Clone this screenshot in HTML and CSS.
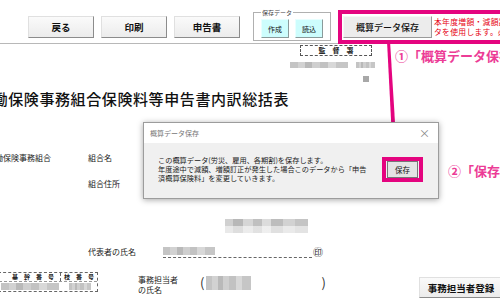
FILE: index.html
```html
<!DOCTYPE html>
<html>
<head>
<meta charset="utf-8">
<title>概算データ保存</title>
<link rel="stylesheet" href="styles.css">
</head>
<body>
<div class="page">
	<div class="toolbar">
		<button class="btn">戻る</button>
		<button class="btn">印刷</button>
		<button class="btn">申告書</button>
		<fieldset class="saved">
			<legend>保存データ</legend>
			<button class="btn-cyan">作成</button>
			<button class="btn-cyan">読込</button>
		</fieldset>
		<div class="highlight">
			<button class="btn-estimate">概算データ保存</button>
			<p class="notice">本年度増額・減額訂正<br>タを使用します。必ず</p>
		</div>
	</div>

	<div class="sheet">
		<div class="office">
			<div class="stamp">監　督　署</div>
			<div class="office-code"><span class="mosaic m1"></span><span class="mosaic m2"></span></div>
			<span class="mosaic m3"></span>
		</div>
		<h1 class="title">労働保険事務組合保険料等申告書内訳総括表</h1>
		<div class="row row-union">
			<span class="org">労働保険事務組合</span>
			<span class="label">組合名</span>
		</div>
		<div class="row row-address">
			<span class="label">組合住所</span>
		</div>
		<span class="mosaic m4"></span>
		<div class="row row-rep">
			<span class="label">代表者の氏名</span>
			<span class="sign"><span class="mosaic m5"></span></span>
			<span class="seal">㊞</span>
		</div>
		<div class="row row-bottom">
			<div class="number">
				<div class="number-head"><span class="base">基　幹　番　号</span><span class="branch">枝　番　号</span></div>
				<div class="number-body"><span class="mosaic m6"></span><span class="mosaic m7"></span></div>
			</div>
			<div class="clerk">事務担当者<br>の氏名</div>
			<div class="clerk-name"><span class="paren">(</span><span class="mosaic m8"></span><span class="paren paren-end">)</span></div>
			<button class="btn btn-clerk">事務担当者登録</button>
		</div>
	</div>

	<!-- 注釈 -->
	<svg class="arrow" width="30" height="122" viewBox="0 0 30 122">
		<polygon points="7,0 10,0 16,98 12,98" fill="#e4047f"/>
		<polyline points="4,96 14,113 24,96" fill="none" stroke="#e4047f" stroke-width="4.5" stroke-linecap="round" stroke-linejoin="round"/>
	</svg>
	<div class="callout callout1">①「概算データ保存」</div>
	<div class="callout callout2">②「保存」</div>

	<div class="dialog">
		<div class="dialog-title"><span>概算データ保存</span><span class="dialog-close">×</span></div>
		<div class="dialog-body">
			<p class="dialog-text">この概算データ(労災、雇用、各期割)を保存します。<br>年度途中で減額、増額訂正が発生した場合このデータから「申告<br>済概算保険料」を変更していきます。</p>
			<div class="dialog-mark"><button class="btn-save">保存</button></div>
		</div>
	</div>
</div>
</body>
</html>
```

FILE: styles.css
```css
*{margin:0; padding:0; box-sizing:border-box;}
body{background:#fff; font-family:"Noto Sans CJK JP","Noto Sans",sans-serif; color:#222;}
.page{width:500px; height:308px; position:relative; overflow:hidden;}
button{font-family:inherit; color:#111; cursor:pointer;}

/* toolbar */
.toolbar{display:flex; align-items:flex-start; height:44px; padding-left:28px; border-bottom:1px solid #b8b8b8;}
.btn{flex:none; width:66px; height:22px; margin-top:16px; margin-right:7px; font-size:9.5px; font-weight:700; background:linear-gradient(#fafafa,#ececec); border:1px solid; border-color:#e0e0e0 #8c8c8c #8c8c8c #e0e0e0;}
.saved{flex:none; margin-top:9px; margin-left:6px; width:77px; height:32px; border:1px solid #b0b0b0; padding:0 7px; display:flex; gap:6px; align-items:flex-start;}
.saved legend{font-size:6px; color:#444; padding:0 1px; line-height:7px;}
.btn-cyan{width:28px; height:19px; margin-top:3px; font-size:7px; background:#cdfdfd; border:1px solid; border-color:#e8ffff #8a9a9a #8a9a9a #e8ffff;}
.highlight{flex:none; margin-top:10px; margin-left:7px; height:34px; width:170px; border:4px solid #e4047f; display:flex; align-items:flex-start; background:#fff; overflow:hidden;}
.btn-estimate{flex:none; width:89px; height:22px; margin-top:2px; margin-left:1px; font-size:9px; font-weight:500; background:#ececec; border:1px solid; border-color:#f6f6f6 #9a9a9a #9a9a9a #f6f6f6;}
.notice{flex:none; margin-top:3px; margin-left:2px; font-size:7.8px; letter-spacing:0.3px; line-height:10px; color:#e60012; white-space:nowrap;}

/* sheet */
.sheet{font-size:8px;}
.office{padding-left:290px; padding-top:1px;}
.stamp{margin-left:10px; width:72px; height:11px; border:1px dashed #555; font-size:7px; font-weight:700; line-height:9px; text-align:center; color:#222;}
.office-code{display:flex; gap:8px; margin-top:6px; height:6px;}
.mosaic{display:block; background:
	linear-gradient(90deg,#c4c4c4 0 14%,#d2d2d2 14% 26%,#b9b9b9 26% 38%,#cfcfcf 38% 52%,#c2c2c2 52% 66%,#d8d8d8 66% 80%,#c6c6c6 80% 100%);}
.m1{width:58px;}
.m2{width:19px;}
.m3{width:6px; height:6px; margin-left:73px; margin-top:8px; background:#a8a8a8;}
.title{margin-top:8px; font-size:15px; font-weight:500; line-height:18px; letter-spacing:0.6px; text-indent:-23px; white-space:nowrap; color:#111;}
.row{display:flex; align-items:center; white-space:nowrap;}
.row-union{margin-top:43px; height:12px;}
.org{width:88px; text-indent:-13px; overflow:hidden;}
.row-address{margin-top:14px; height:12px; padding-left:88px;}
.label{color:#222;}
.m4{margin-top:30px; margin-left:225px; width:83px; height:14px; background:
	linear-gradient(#fff0 0 50%,#fff8 50% 100%),
	linear-gradient(90deg,#d0d0d0 0 10%,#b8b8b8 10% 22%,#d6d6d6 22% 34%,#c0c0c0 34% 45%,#dcdcdc 45% 55%,#bdbdbd 55% 70%,#d2d2d2 70% 84%,#c4c4c4 84% 100%);}
.row-rep{margin-top:12px; height:13px; padding-left:88px; align-items:flex-start;}
.row-rep .label{width:75px; line-height:13px;}
.sign{width:149px; height:13px; border-bottom:1px dashed #666; padding-top:2px;}
.m5{width:52px; height:8px;}
.seal{font-size:10px; line-height:13px; margin-left:1px;}
.row-bottom{margin-top:14px; align-items:flex-start;}
.number{width:100px; margin-left:-2px; height:20px; border:1px dashed #666; font-size:6px; font-weight:700;}
.number-head{display:flex; height:9px; line-height:8px; border-bottom:1px dashed #999;}
.base{width:62px; text-align:right; padding-right:6px; border-right:1px dashed #666; overflow:hidden;}
.branch{flex:1; text-align:center;}
.number-body{display:flex; gap:10px; padding-top:1px; padding-left:2px;}
.m6{width:58px; height:7px;}
.m7{width:22px; height:7px;}
.clerk{margin-left:40px; font-size:8px; line-height:10px; margin-top:3px;}
.clerk-name{display:flex; align-items:center; margin-left:22px; height:16px; margin-top:3px;}
.paren{font-size:13px; line-height:16px; color:#333;}
.m8{width:45px; height:14px; margin-left:2px;}
.paren-end{margin-left:70px;}
.btn-clerk{width:84px; height:21px; margin-top:5px; margin-left:auto; margin-right:-3px; font-size:9.5px;}

/* annotations */
.arrow{position:absolute; left:380px; top:41px;}
.callout{position:absolute; font-size:13px; font-weight:700; color:#ec3c96; white-space:nowrap; text-shadow:0 0 2px #fff,0 0 2px #fff;}
.callout1{left:395px; top:46px;}
.callout2{left:448px; top:161px;}

/* dialog */
.dialog{position:absolute; left:143px; top:122px; width:296px; height:77px; border:1px solid #9c9c9c; background:#f0f0f0; box-shadow:0 1px 6px rgba(0,0,0,0.35);}
.dialog-title{height:20px; background:#fff; display:flex; align-items:center; justify-content:space-between; padding:0 8px 0 6px; font-size:7px; color:#777;}
.dialog-close{font-size:11px; color:#888;}
.dialog-body{display:flex; align-items:flex-start; padding:13px 0 0 14px;}
.dialog-text{font-size:7.2px; line-height:9px; color:#222; white-space:nowrap; width:224px;}
.dialog-mark{border:4px solid #e4047f; width:41px; height:25px; margin-top:1px; display:flex; align-items:center; justify-content:center;}
.btn-save{width:31px; height:17px; font-size:7.5px; background:#e4e4e4; border:1px solid #777;}
```
